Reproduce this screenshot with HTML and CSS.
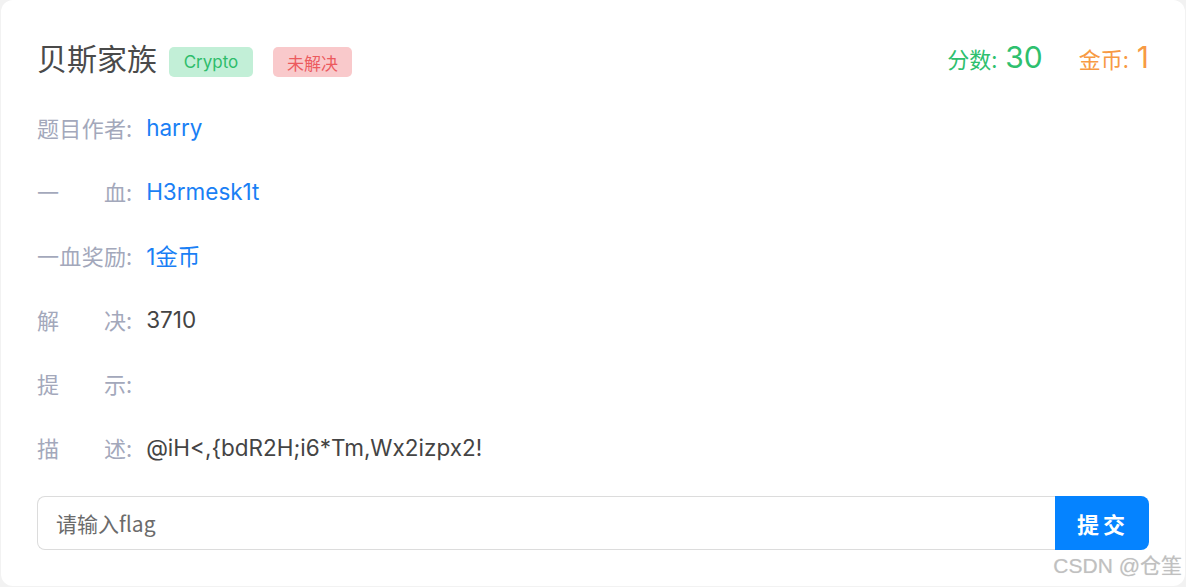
FILE: index.html
```html
<!DOCTYPE html>
<html lang="zh">
<head>
<meta charset="utf-8">
<link rel="stylesheet" href="styles.css">
</head>
<body>
<div class="card">
  <div class="header">
    <div class="title-group">
      <h1 class="title">贝斯家族</h1>
      <span class="tag tag-cat">Crypto</span>
      <span class="tag tag-state">未解决</span>
    </div>
    <div class="stats">
      <span class="stat stat-score">分数: <b>30</b></span>
      <span class="stat stat-coin">金币: <b>1</b></span>
    </div>
  </div>
  <div class="rows">
    <div class="row"><span class="label"><span class="label-text">题目作者</span>:</span><span class="value link">harry</span></div>
    <div class="row"><span class="label"><span class="label-text">一血</span>:</span><span class="value link">H3rmesk1t</span></div>
    <div class="row"><span class="label"><span class="label-text">一血奖励</span>:</span><span class="value link">1金币</span></div>
    <div class="row"><span class="label"><span class="label-text">解决</span>:</span><span class="value">3710</span></div>
    <div class="row"><span class="label"><span class="label-text">提示</span>:</span><span class="value"></span></div>
    <div class="row"><span class="label"><span class="label-text">描述</span>:</span><span class="value">@iH&lt;,{bdR2H;i6*Tm,Wx2izpx2!</span></div>
  </div>
  <div class="submit">
    <input class="flag-input" type="text" placeholder="请输入flag">
    <button class="submit-btn">提交</button>
  </div>
  <div class="watermark">CSDN @仓筀</div>
</div>
</body>
</html>
```
FILE: styles.css
```css
html, body {
  margin: 0;
  padding: 0;
  background: #f2f2f2;
}
body {
  font-family: "Noto Sans CJK SC", "Noto Sans", sans-serif;
}
.card {
  position: relative;
  box-sizing: border-box;
  margin: 0 1px;
  height: 586px;
  background: #fff;
  border-radius: 12px;
  padding: 34px 36px 0 36px;
}
.header {
  display: flex;
  justify-content: space-between;
  align-items: center;
  height: 50px;
}
.title-group {
  display: flex;
  align-items: center;
}
.title {
  margin: -4px 12px 0 0;
  font-size: 30px;
  font-weight: 400;
  color: #4a4a4a;
  line-height: 1;
}
.tag {
  display: inline-flex;
  align-items: center;
  justify-content: center;
  height: 30px;
  border-radius: 5px;
  font-size: 17px;
  margin-right: 20px;
  margin-top: 6px;
}
.tag-cat {
  width: 84px;
  background: #c2efd7;
  color: #2ebd6b;
  font-family: "Inter", "Noto Sans", sans-serif;
}
.tag-state {
  width: 79px;
  background: #f9c9cb;
  color: #ec5a5e;
}
.stats {
  display: flex;
  align-items: baseline;
  gap: 36px;
  margin-top: -4px;
}
.stat {
  font-size: 22px;
}
.stat b {
  font-weight: 400;
  font-size: 30px;
  margin-left: 3px;
  font-family: "Inter", "Noto Sans", sans-serif;
}
.stat-score { color: #2ec06e; }
.stat-coin { color: #f79a44; }
.rows {
  display: flex;
  flex-direction: column;
  margin-top: 11px;
}
.row {
  display: flex;
  align-items: center;
  height: 64px;
}
.label {
  display: flex;
  margin-right: 14px;
  font-size: 22px;
  color: #a3a8bb;
  white-space: nowrap;
}
.label-text {
  width: 89px;
  text-align: justify;
  text-align-last: justify;
}
.value {
  font-size: 22.5px;
  color: #444;
  font-family: "Inter", "Noto Sans CJK SC", sans-serif;
}
.link {
  color: #1a7ff5;
}
.submit {
  display: flex;
  margin-top: 17px;
  height: 54px;
}
.flag-input {
  flex: 1;
  box-sizing: border-box;
  height: 54px;
  border: 1px solid #dcdcdc;
  border-right: none;
  border-radius: 8px 0 0 8px;
  padding: 0 18px;
  font-size: 21px;
  font-family: "Noto Sans CJK SC", sans-serif;
  color: #555;
  outline: none;
}
.flag-input::placeholder {
  color: #6b6b6b;
}
.submit-btn {
  width: 94px;
  height: 54px;
  border: none;
  border-radius: 0 8px 8px 0;
  background: #0583ff;
  color: #fff;
  font-size: 22px;
  font-weight: 700;
  letter-spacing: 4px;
  padding-left: 8px;
  font-family: "Noto Sans CJK SC", sans-serif;
}
.watermark {
  position: absolute;
  right: 3px;
  bottom: 7px;
  font-size: 21px;
  color: #c0c0c0;
  text-shadow: 0 0 1px #e0e0e0;
  font-family: "Liberation Sans", "Noto Sans CJK SC", sans-serif;
}
```
